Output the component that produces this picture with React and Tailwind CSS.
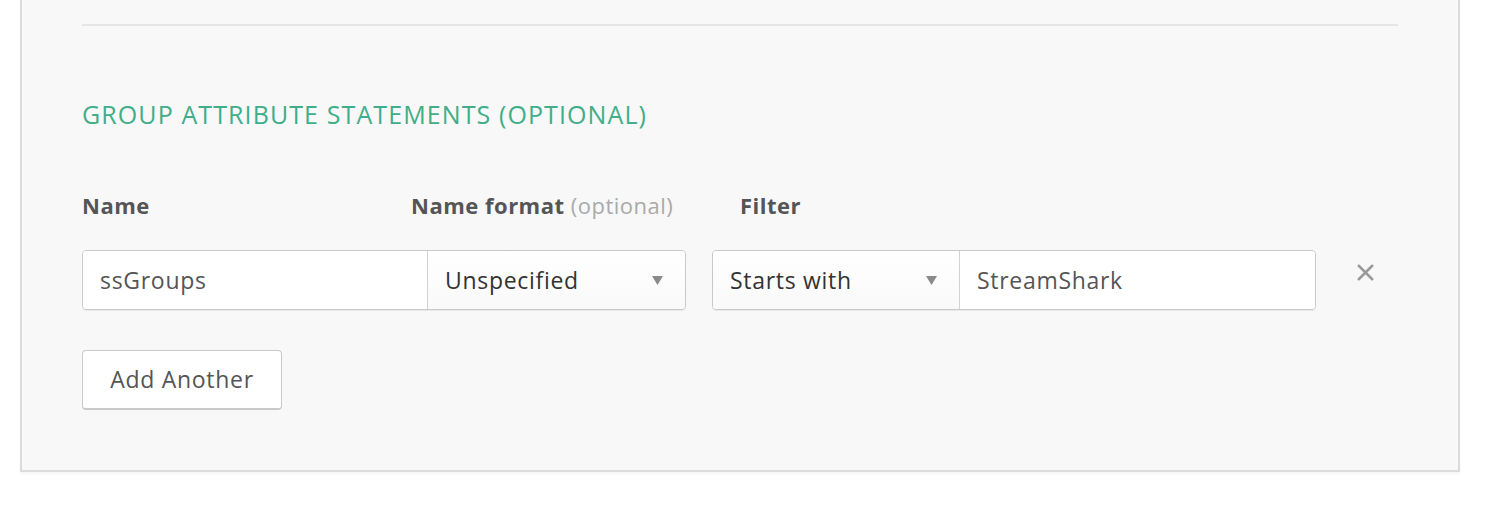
import { X } from 'lucide-react';

const font = { fontFamily: '"Open Sans", Lato, Arial, sans-serif' };

function Caret() {
  return (
    <svg width="11" height="9" viewBox="0 0 11 9" aria-hidden="true">
      <path d="M0 0h11L5.5 9z" fill="#8a8a8a" />
    </svg>
  );
}

function SelectBox({ value, className }) {
  return (
    <div
      className={`flex h-full items-center justify-between bg-gradient-to-b from-white to-[#f9f9f9] pl-[17px] pr-[22px] text-[23px] tracking-[0.7px] text-[#333] ${className}`}
    >
      <span>{value}</span>
      <Caret />
    </div>
  );
}

export default function App() {
  return (
    <div className="h-[518px] w-[1510px] bg-white" style={font}>
      <div className="ml-[20px] h-[472px] w-[1440px] border-x-2 border-b-2 border-[#dcdcdc] bg-[#f8f8f8] px-[60px] shadow-[0_2px_3px_rgba(0,0,0,0.04)]">
        {/* divider */}
        <div className="pt-[24px]">
          <div className="h-[2px] bg-[#e5e5e5]" />
        </div>

        <h2 className="mt-[73px] text-[25px] leading-[30px] font-normal tracking-[1.1px] text-[#3fae89]">
          GROUP ATTRIBUTE STATEMENTS (OPTIONAL)
        </h2>

        {/* labels */}
        <div className="mt-[61px] flex text-[22px] leading-[30px] font-bold tracking-[0.5px] text-[#555]">
          <div className="w-[329px]">Name</div>
          <div className="w-[329px]">
            Name format <span className="font-normal text-[#aaa]">(optional)</span>
          </div>
          <div>Filter</div>
        </div>

        {/* inputs */}
        <div className="mt-[30px] flex h-[60px] items-center">
          <div className="flex h-full w-[604px] overflow-hidden rounded-[4px] border border-[#c9c9c9] shadow-[0_1px_0_rgba(0,0,0,0.06)]">
            <div className="flex w-[344px] items-center bg-white pl-[17px] text-[23px] tracking-[0.7px] text-[#555]">
              ssGroups
            </div>
            <SelectBox value="Unspecified" className="flex-1 border-l border-[#d2d2d2]" />
          </div>
          <div className="ml-[26px] flex h-full w-[604px] overflow-hidden rounded-[4px] border border-[#c9c9c9] shadow-[0_1px_0_rgba(0,0,0,0.06)]">
            <SelectBox value="Starts with" className="w-[246px]" />
            <div className="flex flex-1 items-center border-l border-[#d2d2d2] bg-white pl-[17px] text-[23px] tracking-[0.7px] text-[#555]">
              StreamShark
            </div>
          </div>
          <button className="ml-[36px] -mt-[16px] text-[#999]" aria-label="Remove">
            <X size={27} strokeWidth={2.2} />
          </button>
        </div>

        <button className="mt-[40px] h-[60px] w-[200px] rounded-[4px] border border-[#c9c9c9] border-b-2 bg-white text-[23px] tracking-[0.7px] text-[#555]">
          Add Another
        </button>
      </div>
    </div>
  );
}
